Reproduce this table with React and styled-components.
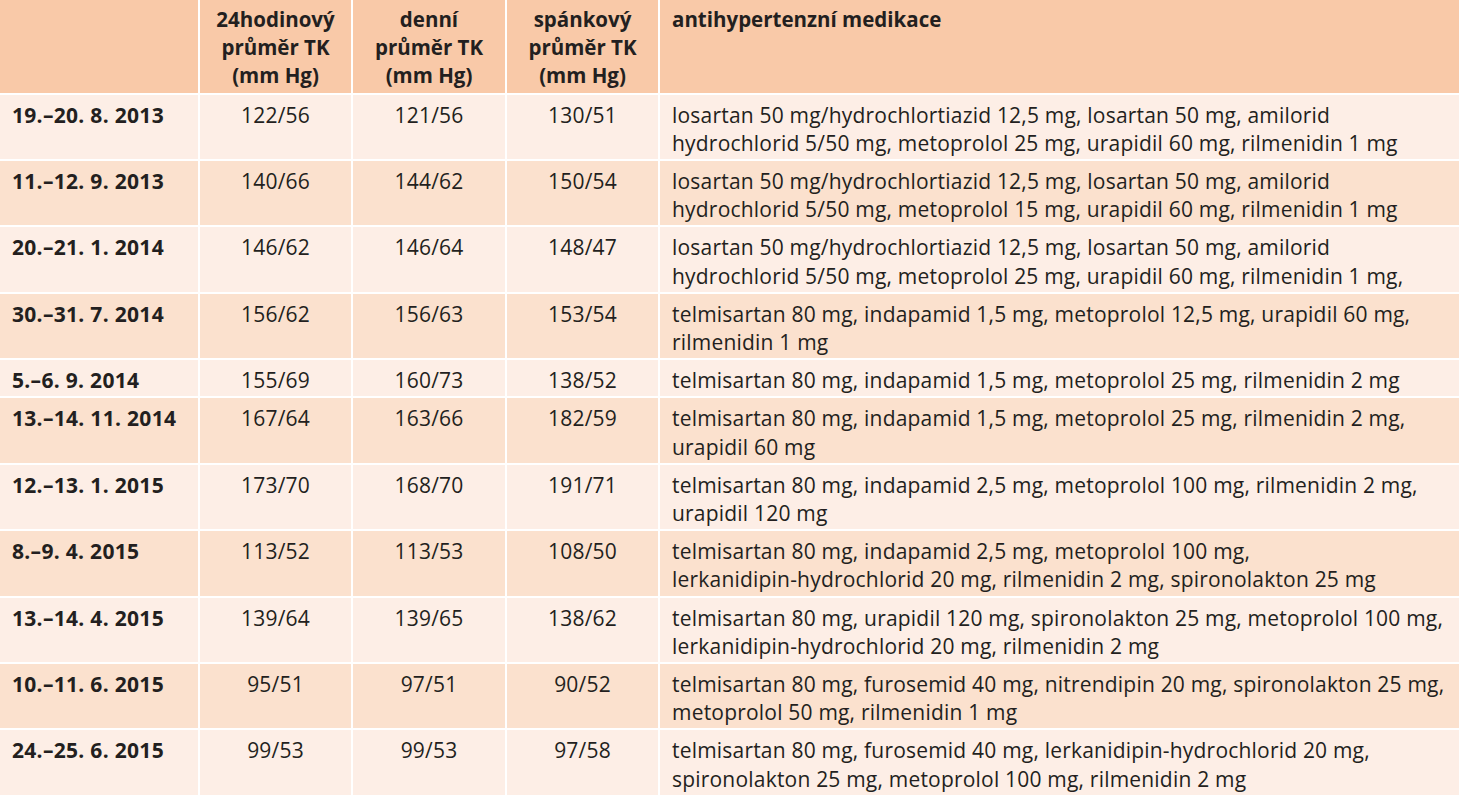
import React from "react";
import styled, { createGlobalStyle } from "styled-components";

const Global = createGlobalStyle`
  html, body { margin: 0; padding: 0; background: #ffffff; }
  body { font-family: "Open Sans", Lato, sans-serif; color: #231f20; }
`;

const Table = styled.div`
  display: flex;
  flex-direction: column;
  gap: 2px;
  width: 1459px;
  background: #ffffff;
`;

const Row = styled.div`
  display: grid;
  grid-template-columns: 198px 151px 152px 151px 1fr;
  column-gap: 2px;
`;

const bg = { head: "#f9c9a8", light: "#fdeee6", dark: "#fbe1ce" };

const Cell = styled.div`
  background: ${(p) => bg[p.$tone]};
  padding: ${(p) => (p.$tone === "head" ? "5px" : "6px")} ${(p) => (p.$align === "center" ? "2px" : "12px")}
    ${(p) => (p.$tone === "head" ? "3px" : "2px")};
  font-family: "Open Sans", Lato, sans-serif;
  font-size: ${(p) => (p.$tone === "head" ? "20.5px" : "21px")};
  letter-spacing: ${(p) => (p.$tone === "head" ? "0" : p.$bold ? "0.3px" : "0.2px")};
  line-height: 28.2px;
  font-weight: ${(p) => (p.$bold ? 700 : 400)};
  text-align: ${(p) => p.$align || "left"};
  white-space: nowrap;
`;

const Line = styled.div``;

const rows = [
  ["19.–20. 8. 2013", "122/56", "121/56", "130/51", ["losartan 50 mg/hydrochlortiazid 12,5 mg, losartan 50 mg, amilorid", "hydrochlorid 5/50 mg, metoprolol 25 mg, urapidil 60 mg, rilmenidin 1 mg"]],
  ["11.–12. 9. 2013", "140/66", "144/62", "150/54", ["losartan 50 mg/hydrochlortiazid 12,5 mg, losartan 50 mg, amilorid", "hydrochlorid 5/50 mg, metoprolol 15 mg, urapidil 60 mg, rilmenidin 1 mg"]],
  ["20.–21. 1. 2014", "146/62", "146/64", "148/47", ["losartan 50 mg/hydrochlortiazid 12,5 mg, losartan 50 mg, amilorid", "hydrochlorid 5/50 mg, metoprolol 25 mg, urapidil 60 mg, rilmenidin 1 mg,"]],
  ["30.–31. 7. 2014", "156/62", "156/63", "153/54", ["telmisartan 80 mg, indapamid 1,5 mg, metoprolol 12,5 mg, urapidil 60 mg,", "rilmenidin 1 mg"]],
  ["5.–6. 9. 2014", "155/69", "160/73", "138/52", ["telmisartan 80 mg, indapamid 1,5 mg, metoprolol 25 mg, rilmenidin 2 mg"]],
  ["13.–14. 11. 2014", "167/64", "163/66", "182/59", ["telmisartan 80 mg, indapamid 1,5 mg, metoprolol 25 mg, rilmenidin 2 mg,", "urapidil 60 mg"]],
  ["12.–13. 1. 2015", "173/70", "168/70", "191/71", ["telmisartan 80 mg, indapamid 2,5 mg, metoprolol 100 mg, rilmenidin 2 mg,", "urapidil 120 mg"]],
  ["8.–9. 4. 2015", "113/52", "113/53", "108/50", ["telmisartan 80 mg, indapamid 2,5 mg, metoprolol 100 mg,", "lerkanidipin-hydrochlorid 20 mg, rilmenidin 2 mg, spironolakton 25 mg"]],
  ["13.–14. 4. 2015", "139/64", "139/65", "138/62", ["telmisartan 80 mg, urapidil 120 mg, spironolakton 25 mg, metoprolol 100 mg,", "lerkanidipin-hydrochlorid 20 mg, rilmenidin 2 mg"]],
  ["10.–11. 6. 2015", "95/51", "97/51", "90/52", ["telmisartan 80 mg, furosemid 40 mg, nitrendipin 20 mg, spironolakton 25 mg,", "metoprolol 50 mg, rilmenidin 1 mg"]],
  ["24.–25. 6. 2015", "99/53", "99/53", "97/58", ["telmisartan 80 mg, furosemid 40 mg, lerkanidipin-hydrochlorid 20 mg,", "spironolakton 25 mg, metoprolol 100 mg, rilmenidin 2 mg"]],
];

const headers = [
  ["24hodinový", "průměr TK", "(mm Hg)"],
  ["denní", "průměr TK", "(mm Hg)"],
  ["spánkový", "průměr TK", "(mm Hg)"],
];

export default function App() {
  return (
    <>
      <Global />
      <Table>
        <Row>
          <Cell $tone="head" $bold />
          {headers.map((h, i) => (
            <Cell key={i} $tone="head" $bold $align="center">
              {h.map((l, j) => (
                <Line key={j}>{l}</Line>
              ))}
            </Cell>
          ))}
          <Cell $tone="head" $bold>
            antihypertenzní medikace
          </Cell>
        </Row>
        {rows.map((r, i) => {
          const tone = i % 2 === 0 ? "light" : "dark";
          return (
            <Row key={i}>
              <Cell $tone={tone} $bold>{r[0]}</Cell>
              <Cell $tone={tone} $align="center">{r[1]}</Cell>
              <Cell $tone={tone} $align="center">{r[2]}</Cell>
              <Cell $tone={tone} $align="center">{r[3]}</Cell>
              <Cell $tone={tone}>
                {r[4].map((l, j) => (
                  <Line key={j}>{l}</Line>
                ))}
              </Cell>
            </Row>
          );
        })}
      </Table>
    </>
  );
}
